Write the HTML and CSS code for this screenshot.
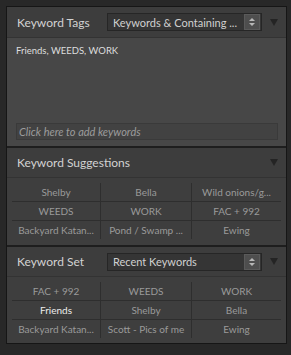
FILE: index.html
```html
<!DOCTYPE html>
<html>
<head>
    <meta charset="UTF-8">
    <title>Keywording</title>
    <link rel="stylesheet" href="styles.css">
</head>
<body>

<div class="peek"></div>

<div class="panel">

    <div class="section">
        <div class="head first">
            <span class="label">Keyword Tags</span>
            <div class="select">
                <span class="select-text">Keywords &amp; Containing ...</span>
                <span class="stepper"><i class="up"></i><i class="down"></i></span>
            </div>
            <span class="toggle"></span>
        </div>
        <div class="tags-body">
            <div class="tags">Friends, WEEDS, WORK</div>
            <div class="add">Click here to add keywords</div>
        </div>
    </div>

    <div class="section">
        <div class="head">
            <span class="label">Keyword Suggestions</span>
            <span class="toggle"></span>
        </div>
        <div class="grid-wrap">
            <div class="grid">
                <div class="cell">Shelby</div>
                <div class="cell">Bella</div>
                <div class="cell">Wild onions/g...</div>
                <div class="cell">WEEDS</div>
                <div class="cell">WORK</div>
                <div class="cell">FAC + 992</div>
                <div class="cell">Backyard Katan...</div>
                <div class="cell">Pond / Swamp ...</div>
                <div class="cell">Ewing</div>
            </div>
        </div>
    </div>

    <div class="section last">
        <div class="head">
            <span class="label">Keyword Set</span>
            <div class="select">
                <span class="select-text">Recent Keywords</span>
                <span class="stepper"><i class="up"></i><i class="down"></i></span>
            </div>
            <span class="toggle"></span>
        </div>
        <div class="grid-wrap">
            <div class="grid">
                <div class="cell">FAC + 992</div>
                <div class="cell">WEEDS</div>
                <div class="cell">WORK</div>
                <div class="cell on">Friends</div>
                <div class="cell">Shelby</div>
                <div class="cell">Bella</div>
                <div class="cell">Backyard Katan...</div>
                <div class="cell">Scott - Pics of me</div>
                <div class="cell">Ewing</div>
            </div>
        </div>
    </div>

</div>

</body>
</html>
```

FILE: styles.css
```css
body{
    margin: 0;
    background-color: #282828;
    font-family: Lato, "Liberation Sans", Arial, sans-serif;
    color: #cfcfcf;
}

.peek{
    height: 6px;
}

.panel{
    margin: 0 4px 0 6px;
    border: 1px solid #161616;
    background-color: #3e3e3e;
}

.section{
    border-bottom: 2px solid #1e1e1e;
}
.section.last{
    border-bottom: none;
}

.head{
    display: flex;
    align-items: center;
    height: 29px;
    padding: 0 8px 0 10px;
    border-bottom: 1px solid #333;
    background-color: #3d3d3d;
}
.head.first{
    height: 30px;
}
.label{
    font-size: 12px;
    color: #d2d2d2;
    min-width: 90px;
    white-space: nowrap;
}

.select{
    display: flex;
    align-items: center;
    width: 153px;
    height: 16px;
    border: 1px solid #262626;
    background-color: #353535;
    margin-right: 8px;
}
.select-text{
    flex: 1;
    padding-left: 5px;
    font-size: 11px;
    color: #d0d0d0;
    white-space: nowrap;
    overflow: hidden;
}
.stepper{
    width: 14px;
    height: 14px;
    margin-right: 1px;
    background-color: #4e4e4e;
    border: 1px solid #5a5a5a;
    display: flex;
    flex-direction: column;
    align-items: center;
    justify-content: center;
    gap: 2px;
}
.stepper i{
    width: 0;
    height: 0;
    border-left: 3px solid transparent;
    border-right: 3px solid transparent;
}
.stepper .up{
    border-bottom: 3px solid #b8b8b8;
}
.stepper .down{
    border-top: 3px solid #b8b8b8;
}

.toggle{
    margin-left: auto;
    width: 0;
    height: 0;
    border-left: 4px solid transparent;
    border-right: 4px solid transparent;
    border-top: 7px solid #242424;
}

.tags-body{
    background-color: #474747;
    height: 108px;
    padding: 0 8px 0 9px;
    display: flex;
    flex-direction: column;
}
.tags{
    font-size: 9.5px;
    color: #dedede;
    margin-top: 7px;
}
.add{
    margin-top: auto;
    margin-bottom: 6px;
    height: 15px;
    border: 1px solid #3a3a3a;
    background-color: #424242;
    font-size: 11px;
    font-style: italic;
    line-height: 15px;
    padding-left: 2px;
    color: #9c9c9c;
}

.grid-wrap{
    padding: 5px 4px 6px 5px;
    background-color: #3e3e3e;
}
.section.last .grid-wrap{
    padding-bottom: 5px;
}
.grid{
    display: grid;
    grid-template-columns: 89px 91px 89px;
}
.cell{
    height: 18px;
    line-height: 18px;
    text-align: center;
    font-size: 10px;
    color: #9a9a9a;
    white-space: nowrap;
    overflow: hidden;
    border-right: 1px solid #2e2e2e;
    border-bottom: 1px solid #2e2e2e;
}
.cell:nth-child(3n){
    border-right: none;
}
.cell:nth-child(n+7){
    border-bottom: none;
}
.cell.on{
    color: #ececec;
}
```
